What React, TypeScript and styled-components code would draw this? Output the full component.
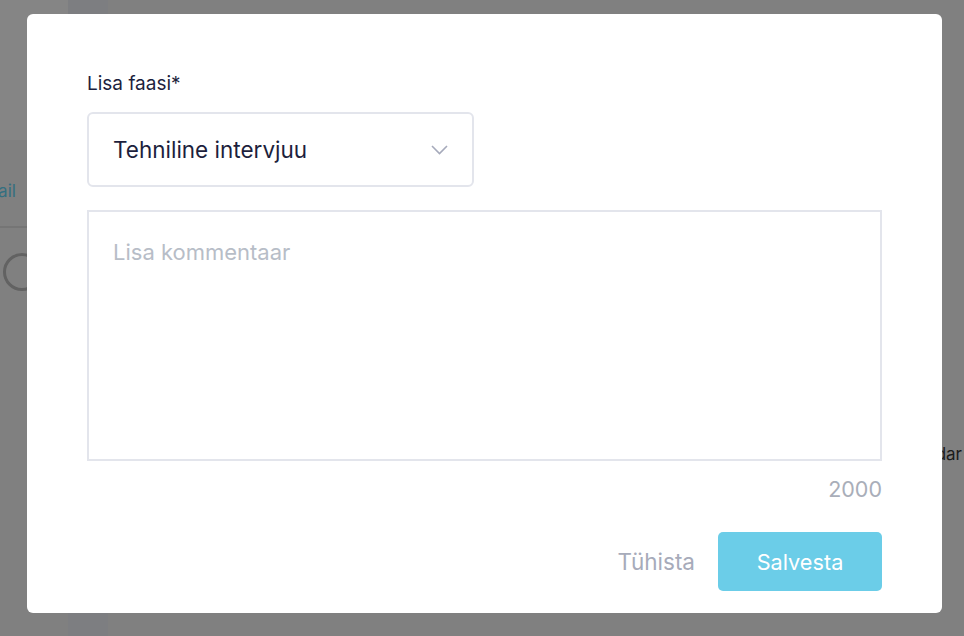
import React from 'react';
import styled, { createGlobalStyle } from 'styled-components';

const GlobalStyle = createGlobalStyle`
    html, body {
        margin: 0;
        padding: 0;
        width: 100%;
        height: 100%;
        overflow: hidden;
        background: #808080;
        font-family: Inter, "Noto Sans", sans-serif;
    }
`;

const Page = styled.div`
    width: 964px;
    height: 636px;
    display: grid;
    grid-template-columns: 68px 40px 1fr;
    background: #808080;
    overflow: hidden;
`;

const SideColumn = styled.div`
    display: flex;
    flex-direction: column;
`;

const HeaderBlock = styled.div`
    height: 140px;
    background: #858585;
`;

const TabRow = styled.div`
    height: 88px;
    border-bottom: 2px solid #757575;
    display: flex;
    align-items: center;
    padding-top: 16px;
    box-sizing: border-box;
`;

const TabText = styled.span`
    margin-left: -27px;
    font-size: 17px;
    color: #346f80;
`;

const Ring = styled.div`
    margin: 25px 0 0 3px;
    width: 32px;
    height: 32px;
    border: 3px solid #626262;
    border-radius: 50%;
`;

const Strip = styled.div`
    background: #7d7e81;
`;

const MainColumn = styled.div`
    display: flex;
    flex-direction: column;
    align-items: flex-end;
    padding-top: 444px;
`;

const BehindText = styled.span`
    margin-right: 2px;
    font-size: 17px;
    color: #1b1b1b;
`;

const Overlay = styled.div`
    position: fixed;
    inset: 0;
    padding: 14px 0 0 27px;
    box-sizing: border-box;
`;

const Modal = styled.div`
    width: 915px;
    height: 599px;
    background: #ffffff;
    border-radius: 6px;
    padding: 59px 60px 22px 60px;
    box-sizing: border-box;
    display: flex;
    flex-direction: column;
`;

const Label = styled.label`
    font-size: 19px;
    color: #1d1f3d;
    line-height: 22px;
    margin-bottom: 17px;
`;

const Select = styled.div`
    width: 387px;
    height: 75px;
    box-sizing: border-box;
    border: 2px solid #e3e5ec;
    border-radius: 6px;
    display: flex;
    align-items: center;
    justify-content: space-between;
    padding: 0 24px 0 24px;
    font-size: 22.5px;
    color: #1d1f3d;
`;

const Chevron = () => (
    <svg width="17" height="10" viewBox="0 0 17 10" fill="none">
        <path d="M1 1l7.5 7.5L16 1" stroke="#a6aabb" strokeWidth="1.6" />
    </svg>
);

const TextArea = styled.textarea`
    margin-top: 23px;
    width: 795px;
    height: 251px;
    box-sizing: border-box;
    border: 2px solid #e3e5ec;
    border-radius: 0;
    padding: 27px 24px;
    resize: none;
    outline: none;
    font-family: inherit;
    font-size: 22px;
    color: #1d1f3d;

    &::placeholder {
        color: #b7bdc7;
    }
`;

const Counter = styled.div`
    align-self: flex-end;
    margin-top: 15px;
    font-size: 21.5px;
    color: #a9aeb9;
`;

const Footer = styled.div`
    margin-top: auto;
    display: flex;
    justify-content: flex-end;
    align-items: center;
    gap: 23px;
`;

const Button = styled.button<{ $primary?: boolean }>`
    font-family: inherit;
    font-size: ${p => (p.$primary ? '21.7px' : '22.5px')};
    border: none;
    cursor: pointer;
    height: 59px;
    border-radius: 5px;
    padding: 0;
    width: ${p => (p.$primary ? '164px' : 'auto')};
    background: ${p => (p.$primary ? '#6bcde8' : 'transparent')};
    color: ${p => (p.$primary ? '#ffffff' : '#a7abba')};
`;

const App: React.FC = () => {
    return (
        <>
            <GlobalStyle />
            <Page>
                <SideColumn>
                    <HeaderBlock />
                    <TabRow>
                        <TabText>Email</TabText>
                    </TabRow>
                    <Ring />
                </SideColumn>
                <Strip />
                <MainColumn>
                    <BehindText>Standar</BehindText>
                </MainColumn>
            </Page>
            <Overlay>
                <Modal>
                    <Label>Lisa faasi*</Label>
                    <Select>
                        <span>Tehniline intervjuu</span>
                        <Chevron />
                    </Select>
                    <TextArea placeholder="Lisa kommentaar" />
                    <Counter>2000</Counter>
                    <Footer>
                        <Button>Tühista</Button>
                        <Button $primary>Salvesta</Button>
                    </Footer>
                </Modal>
            </Overlay>
        </>
    );
};

export default App;
